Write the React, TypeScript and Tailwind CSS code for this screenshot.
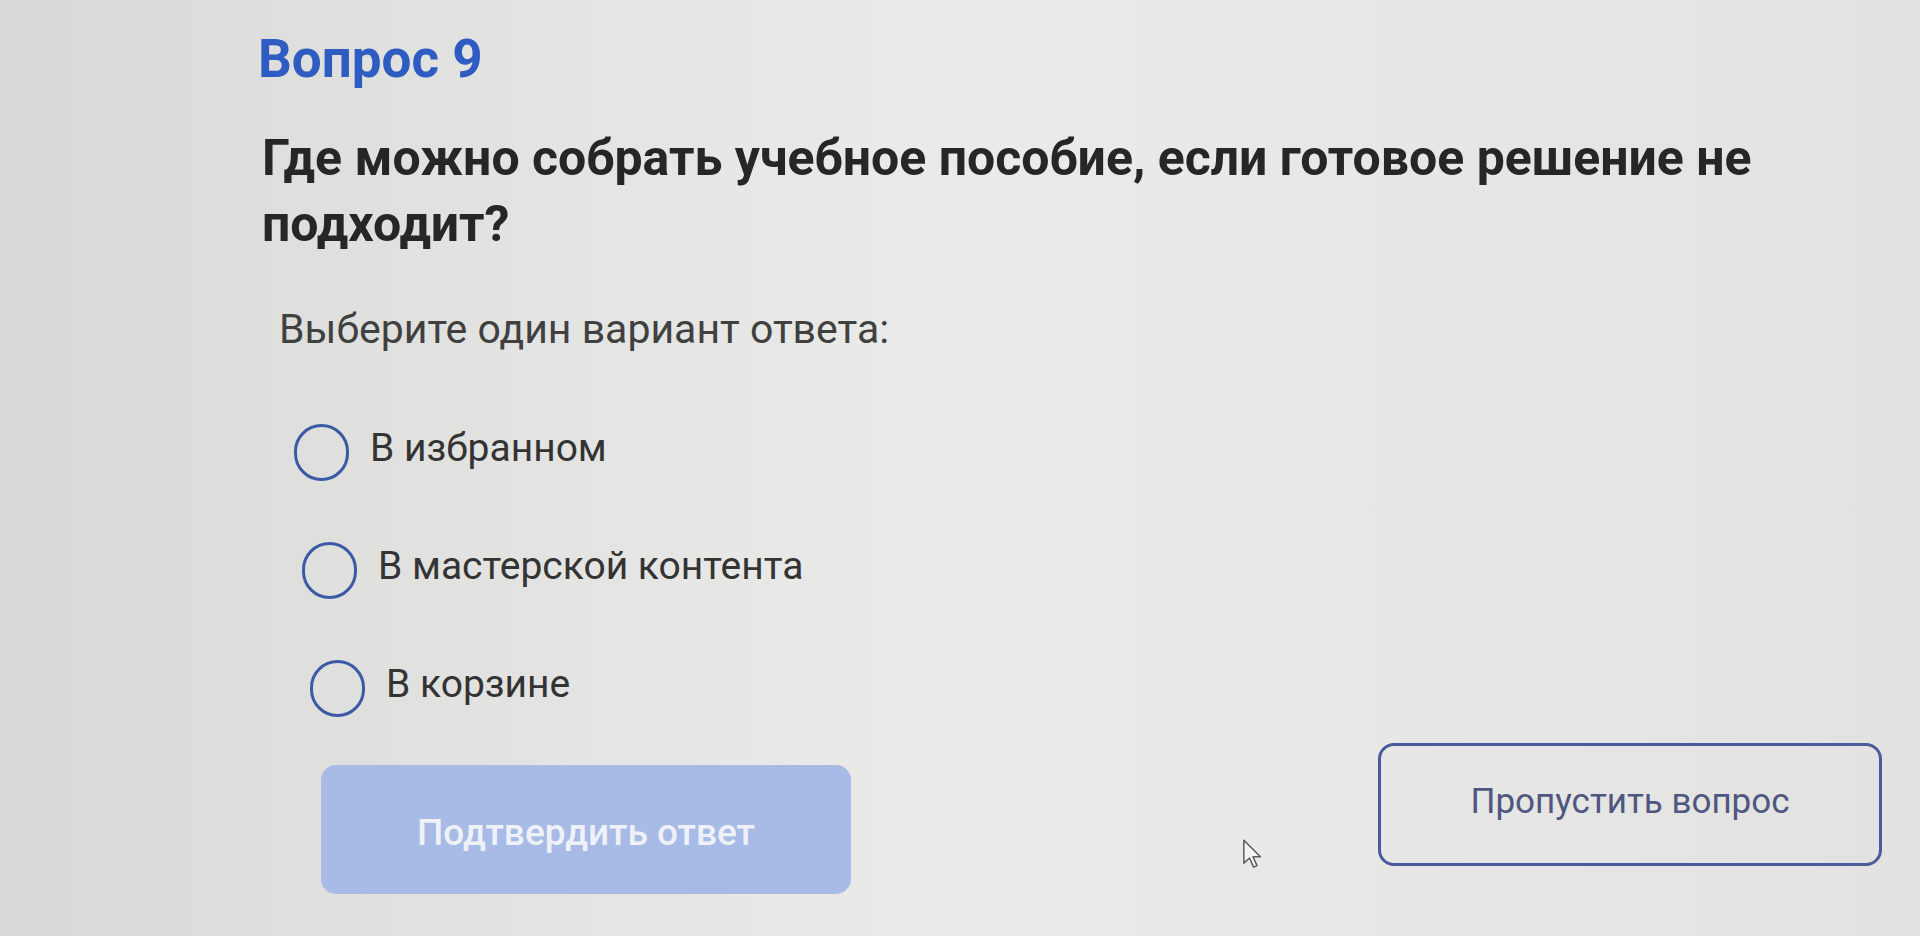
const options = [
  { label: "В избранном", indent: "ml-[36px]" },
  { label: "В мастерской контента", indent: "ml-[44px]" },
  { label: "В корзине", indent: "ml-[52px]" },
];

function Radio() {
  return <span className="block w-[55px] h-[57px] shrink-0 rounded-full border-[3.5px] border-[#3b5aa6]" />;
}

function Cursor() {
  return (
    <svg
      className="absolute left-[1241px] top-[838px]"
      width="24"
      height="32"
      viewBox="0 0 20 28"
      fill="none"
    >
      <path
        d="M2 2 L2 22 L7 17.5 L10.5 25.5 L13.5 24.2 L10 16.4 L16.5 16.4 Z"
        fill="#f4f4f2"
        stroke="#5a5a5a"
        strokeWidth="1.3"
        strokeLinejoin="round"
      />
    </svg>
  );
}

export default function App() {
  return (
    <div className="relative w-full h-[936px] overflow-hidden bg-linear-to-r from-[#d9dad8] via-[#ebebe9] to-[#e2e2e0] font-['Roboto',sans-serif]">
      <div className="pl-[258px] pt-[28px] pr-[38px] flex flex-col">
        <h2 className="text-[53px] leading-[63px] font-bold text-[#2f5cc0]">Вопрос 9</h2>

        <h1 className="mt-[34px] ml-[4px] w-[1550px] text-[50px] leading-[66px] font-bold text-[#262626]">
          Где можно собрать учебное пособие, если готовое решение не подходит?
        </h1>

        <p className="mt-[47px] ml-[21px] text-[41px] leading-[50px] text-[#404040]">
          Выберите один вариант ответа:
        </p>

        <div className="mt-[70px] flex flex-col gap-[61px]">
          {options.map((o) => (
            <label key={o.label} className={`${o.indent} flex items-center gap-[21px] cursor-pointer`}>
              <Radio />
              <span className="pb-[8px] text-[39px] leading-[47px] text-[#333333]">{o.label}</span>
            </label>
          ))}
        </div>

        <div className="mt-[26px] flex items-start justify-between">
          <button
            disabled
            className="mt-[22px] ml-[63px] w-[530px] h-[129px] rounded-[15px] bg-[#a8bae6] pt-[6px] text-[37px] font-medium text-[#eef1f8]"
          >
            Подтвердить ответ
          </button>
          <button className="w-[504px] h-[123px] rounded-[16px] border-[3px] border-[#4a5a9a] pb-[4px] text-[35px] text-[#4f5780]">
            Пропустить вопрос
          </button>
        </div>
      </div>
      <Cursor />
    </div>
  );
}
